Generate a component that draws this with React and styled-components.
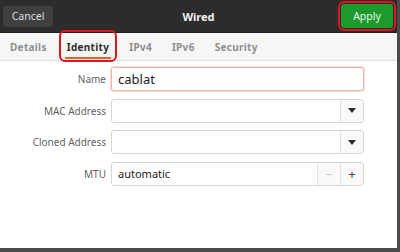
import React from "react";
import styled, { createGlobalStyle } from "styled-components";

const Global = createGlobalStyle`
  html, body { margin: 0; padding: 0; background: #4a4a4a; }
  body { font-family: "Noto Sans", "Open Sans", sans-serif; }
`;

const Window = styled.div`
  width: 397px;
  height: 248px;
  background: #ffffff;
  display: flex;
  flex-direction: column;
  overflow: hidden;
`;

const HeaderBar = styled.div`
  height: 32px;
  background: #2c2c2c;
  display: flex;
  align-items: center;
  justify-content: space-between;
  padding: 0 4px 0 3px;
  position: relative;
  border-bottom: 1px solid #1e1e1e;
`;

const Title = styled.div`
  position: absolute;
  left: 0;
  right: 0;
  text-align: center;
  color: #f2f2f2;
  font-weight: 700;
  font-size: 11px;
  pointer-events: none;
`;

const HeadButton = styled.button`
  font-family: inherit;
  font-size: 10.5px;
  border: none;
  border-radius: 3px;
  color: ${(p) => (p.primary ? "#e9f7e9" : "#dedede")};
  background: ${(p) => (p.primary ? "#1c9a2c" : "#404040")};
  width: ${(p) => (p.primary ? "52px" : "50px")};
  height: ${(p) => (p.primary ? "24px" : "21px")};
  padding: 0;
  position: relative;
  z-index: 1;
  ${(p) => p.marked && `outline: 2px solid #e0141e; outline-offset: 1px;`}
`;

const TabBar = styled.div`
  height: 27px;
  background: #f6f6f6;
  border-bottom: 1px solid #e2e2e2;
  display: flex;
  align-items: stretch;
  padding-left: 10px;
  gap: 20px;
`;

const Tab = styled.div`
  position: relative;
  display: flex;
  align-items: center;
  font-size: 10px;
  font-weight: 700;
  letter-spacing: 0.3px;
  color: ${(p) => (p.active ? "#2e2e2e" : "#8e8e8e")};
  &::after {
    content: "";
    display: ${(p) => (p.active ? "block" : "none")};
    position: absolute;
    left: -2px;
    right: -2px;
    bottom: 1px;
    height: 2px;
    background: #e9622a;
  }
`;

const Marker = styled.div`
  position: absolute;
  left: -8px;
  right: -8px;
  top: -3px;
  bottom: -2px;
  border: 2px solid #e0141e;
  border-radius: 6px;
`;

const Form = styled.div`
  display: grid;
  grid-template-columns: 106px 253px;
  column-gap: 5px;
  row-gap: 7.5px;
  padding: 6px 0 0 0;
`;

const Label = styled.div`
  font-size: 10px;
  color: #626262;
  text-align: right;
  align-self: center;
`;

const Field = styled.div`
  height: 22px;
  border: 1px solid ${(p) => (p.focused ? "#eab8a8" : "#d6d6d6")};
  border-radius: 3px;
  background: #fff;
  display: flex;
  align-items: stretch;
  box-shadow: ${(p) => (p.focused ? "0 0 0 1px #f6ddd4" : "none")};
`;

const Value = styled.div`
  flex: 1;
  display: flex;
  align-items: center;
  padding-left: 6px;
  font-size: ${(p) => (p.big ? "13px" : "11px")};
  color: #222;
`;

const SideButton = styled.div`
  width: 22px;
  border-left: 1px solid #e2e2e2;
  background: #f9f9f9;
  display: flex;
  align-items: center;
  justify-content: center;
  color: ${(p) => (p.dim ? "#c8c8c8" : "#444")};
  font-size: 13px;
`;

const Caret = () => (
  <svg width="8" height="5" viewBox="0 0 8 5">
    <path d="M0 0 L8 0 L4 5 Z" fill="#2a2a2a" />
  </svg>
);

export default function App() {
  return (
    <>
      <Global />
      <Window>
        <HeaderBar>
          <HeadButton>Cancel</HeadButton>
          <Title>Wired</Title>
          <HeadButton primary marked>
            Apply
          </HeadButton>
        </HeaderBar>
        <TabBar>
          <Tab>Details</Tab>
          <Tab active>
            Identity
            <Marker />
          </Tab>
          <Tab>IPv4</Tab>
          <Tab>IPv6</Tab>
          <Tab>Security</Tab>
        </TabBar>
        <Form>
          <Label>Name</Label>
          <Field focused>
            <Value big>cablat</Value>
          </Field>
          <Label>MAC Address</Label>
          <Field>
            <Value />
            <SideButton>
              <Caret />
            </SideButton>
          </Field>
          <Label>Cloned Address</Label>
          <Field>
            <Value />
            <SideButton>
              <Caret />
            </SideButton>
          </Field>
          <Label>MTU</Label>
          <Field>
            <Value>automatic</Value>
            <SideButton dim>−</SideButton>
            <SideButton>+</SideButton>
          </Field>
        </Form>
      </Window>
    </>
  );
}
